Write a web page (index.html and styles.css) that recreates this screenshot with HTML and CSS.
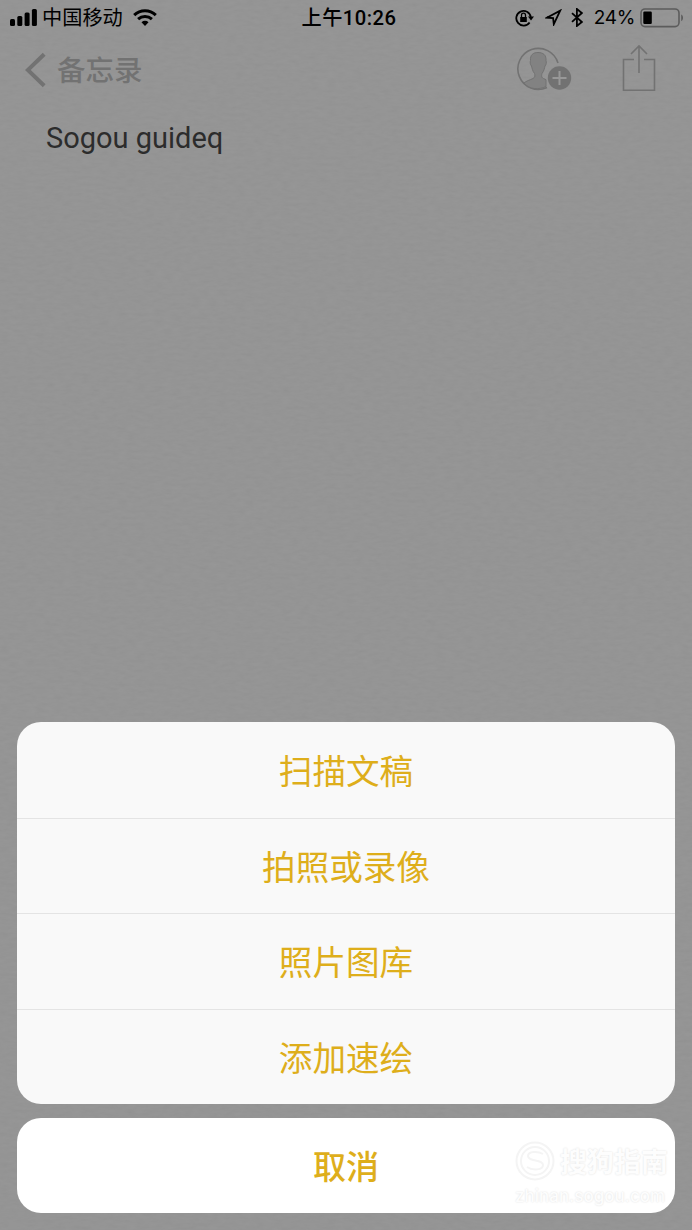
FILE: index.html
```html
<!DOCTYPE html>
<html lang="zh-CN">

<head>
    <meta charset="UTF-8" />
    <meta name="viewport" content="width=device-width, initial-scale=1.0" />
    <title>备忘录</title>
    <link rel="stylesheet" href="styles.css">
</head>

<body>
    <!-- Paper grain -->
    <svg class="paper" aria-hidden="true">
        <filter id="grain" x="0" y="0" width="100%" height="100%">
            <feTurbulence type="fractalNoise" baseFrequency="0.11 0.3" numOctaves="3" seed="4" />
            <feColorMatrix type="saturate" values="0" />
            <feComponentTransfer>
                <feFuncA type="linear" slope="0" intercept="1" />
            </feComponentTransfer>
        </filter>
        <rect width="100%" height="100%" filter="url(#grain)" />
    </svg>

    <div class="screen">
        <header class="status-bar">
            <div class="status-left">
                <svg class="signal" width="27" height="17" viewBox="0 0 27 17">
                    <rect x="0" y="10" width="5" height="7" rx="1.5" />
                    <rect x="7.3" y="7" width="5" height="10" rx="1.5" />
                    <rect x="14.6" y="3.5" width="5" height="13.5" rx="1.5" />
                    <rect x="21.9" y="0" width="5" height="17" rx="1.5" />
                </svg>
                <span class="carrier">中国移动</span>
                <svg class="wifi" width="24" height="17" viewBox="0 0 24 17">
                    <path d="M1.2 6.2C7.2.4 16.8.4 22.8 6.2" />
                    <path d="M5.1 10.1c3.9-3.6 9.9-3.6 13.8 0" />
                    <path class="dot" d="M8.5 13.2c2-1.8 5-1.8 7 0L12 17z" />
                </svg>
            </div>
            <div class="time">上午10:26</div>
            <div class="status-right">
                <svg class="lock" width="19" height="18" viewBox="0 0 19 18">
                    <path d="M14.6 13.4A7.3 7.3 0 1 1 15.8 8" />
                    <path class="solid" d="M13 7.4h6l-3 4zM5.2 8h6.600v5H5.200z" />
                    <path class="shackle" d="M6.500 8V6.200a2 2 0 0 1 4 0V8" />
                </svg>
                <svg class="location" width="17" height="17" viewBox="0 0 17 17">
                    <path d="M1.800 8.700 15.200 1.600 8.800 15.200 8.100 9z" />
                </svg>
                <svg class="bluetooth" width="12" height="19" viewBox="0 0 12 19">
                    <path d="M1 5.200 10.800 14 5.900 18V1L10.800 5 1 13.800" />
                </svg>
                <span class="percent">24%</span>
                <svg class="battery" width="44" height="20" viewBox="0 0 44 20">
                    <rect class="case" x="1" y="1" width="38" height="17.600" rx="4" />
                    <rect class="level" x="3.300" y="3.600" width="8.500" height="12.400" rx="1.200" />
                    <path class="cap" d="M41.200 6.500c2.400.7 2.400 5.900 0 6.600z" />
                </svg>
            </div>
        </header>

        <nav class="nav-bar">
            <a class="back" href="#">
                <svg width="22" height="36" viewBox="0 0 22 36">
                    <path d="M19.200 2.200 2.800 18 19.200 33.800" />
                </svg>
                <span>备忘录</span>
            </a>
            <div class="nav-actions">
                <svg class="add-person" width="55" height="44" viewBox="0 0 55 44">
                    <path class="line" d="M41 16A20.500 20.500 0 1 0 30 40.500" />
                    <path class="person" d="M7 36C9 34 13 33 16 31.500C18.500 30.300 18 28 17.500 26.500C15.500 24 15 21 14.500 19C13 17.500 13 15 13.500 13.500C13 8 16 5.500 21 5.500S29.500 8 29 13.500C29.500 15 29.500 17.500 28 19C27.500 21 27 24 25 26.500C24.500 28 24 30.300 26.500 31.500L29 32.700V39.500C22 43 12 42.500 7 36Z" />
                    <circle class="badge" cx="42.500" cy="31" r="11.700" />
                    <path class="plus" d="M42.500 24v14M35.500 31h14" />
                </svg>
                <svg class="share" width="34" height="48" viewBox="0 0 34 48">
                    <path d="M12 15.500H1.500v30.700h31V15.500H22M17 29V2M9 10l8-8 8 8" />
                </svg>
            </div>
        </nav>

        <main class="note">Sogou guideq</main>

        <div class="action-sheet">
            <div class="options">
                <button class="option">扫描文稿</button>
                <button class="option">拍照或录像</button>
                <button class="option">照片图库</button>
                <button class="option">添加速绘</button>
            </div>
            <div class="cancel-wrap">
                <button class="cancel">取消</button>
                <div class="watermark">
                    <div class="brand">
                        <svg width="40" height="40" viewBox="0 0 40 40">
                            <circle cx="20" cy="20" r="18.500" />
                            <circle cx="20" cy="20" r="14" />
                            <path d="M28 13c-5-3-15-3-15 2 0 6 15 3 15 9 0 5-10 6-16 2" />
                        </svg>
                        <span>搜狗指南</span>
                    </div>
                    <div class="site">zhinan.sogou.com</div>
                </div>
            </div>
        </div>
    </div>
</body>

</html>
```
FILE: styles.css
```css
:root {
    --bg: #939393;
    --dim: #727272;
    --gold: #deae1b;
    --line: #e4e4e4;
}

* {
    box-sizing: border-box;
}

body {
    margin: 0;
    background: var(--bg);
    font-family: Inter, "Noto Sans CJK SC", sans-serif;
    color: #000;
}

svg {
    display: block;
    flex: none;
    fill: none;
}

.paper {
    position: absolute;
    inset: 0;
    width: 100%;
    height: 100%;
    opacity: 0.045;
}

.screen {
    position: relative;
    display: flex;
    flex-direction: column;
    height: 1230px;
    overflow: hidden;
}

.status-bar {
    display: grid;
    grid-template-columns: 1fr auto 1fr;
    align-items: center;
    height: 35px;
    padding: 0 8px 0 10px;
    font-size: 19px;
    line-height: 34px;
}

.status-left,
.status-right {
    display: flex;
    align-items: center;
}

.status-right {
    justify-content: flex-end;
}

.signal,
.wifi .dot {
    fill: #000;
}

.carrier {
    margin: 1px 10px 0 5px;
    font-size: 20.2px;
}

.wifi {
    stroke: #000;
    stroke-width: 3;
}

.wifi .dot {
    stroke: none;
}

.time {
    padding-left: 4px;
    font-family: Roboto, "Noto Sans CJK SC", sans-serif;
    font-size: 20.2px;
    font-weight: 500;
    letter-spacing: 0.5px;
}

.lock,
.location,
.bluetooth {
    stroke: #000;
    stroke-width: 1.8;
}

.lock .solid {
    fill: #000;
    stroke: none;
}

.lock .shackle {
    stroke-width: 1.3;
}

.location {
    margin-left: 11px;
}

.bluetooth {
    margin: 0 11px 0 9px;
}

.percent {
    margin-right: 5px;
    letter-spacing: -0.3px;
}

.battery .case {
    stroke: #5c5c5c;
    stroke-width: 1.6;
}

.battery .level {
    fill: #000;
}

.battery .cap {
    fill: #5c5c5c;
}

.nav-bar {
    display: flex;
    justify-content: space-between;
    height: 70px;
    padding: 9px 36px 0 25px;
}

.back {
    display: flex;
    align-items: center;
    gap: 10px;
    height: 51px;
    color: var(--dim);
    font-size: 28.5px;
    font-weight: 500;
    line-height: 50px;
    text-decoration: none;
}

.back span {
    padding-top: 3px;
}

.back svg {
    stroke: var(--dim);
    stroke-width: 4;
}

.nav-actions {
    display: flex;
    align-items: flex-start;
    gap: 50px;
    stroke: var(--dim);
    stroke-width: 1.6;
}

.add-person {
    margin-top: 3px;
}

.add-person .person {
    fill: #828282;
    stroke-width: 1;
}

.add-person .badge {
    fill: var(--dim);
    stroke: none;
}

.add-person .plus {
    stroke: #989898;
    stroke-width: 2;
}

.note {
    flex: 1;
    padding: 13px 46px;
    color: #2c2c2c;
    font-family: Roboto, "Noto Sans CJK SC", sans-serif;
    font-size: 29px;
    line-height: 40px;
}

.action-sheet {
    display: flex;
    flex-direction: column;
    gap: 14px;
    padding: 0 17px 17px;
}

.options {
    height: 382px;
    display: grid;
    grid-template-rows: repeat(4, 1fr);
    overflow: hidden;
    border-radius: 24px;
    background: #f9f9f9;
}

.option,
.cancel {
    width: 100%;
    padding: 4px 0 0;
    border: none;
    background: none;
    color: var(--gold);
    font-family: inherit;
    font-size: 33.6px;
    line-height: 1;
}

.option + .option {
    border-top: 1px solid var(--line);
}

.cancel-wrap {
    position: relative;
    height: 95px;
}

.cancel {
    height: 100%;
    border-radius: 24px;
    background: #fff;
    font-size: 33px;
    font-weight: 500;
}

/* Site mark over the cancel button */
.watermark {
    position: absolute;
    top: 21px;
    right: 7px;
    width: 153px;
    color: #fdfdfd;
    text-shadow: 0 0 2px #ddd;
    pointer-events: none;
}

.brand {
    display: flex;
    align-items: center;
    gap: 5px;
    font-size: 27px;
    font-weight: 700;
    line-height: 40px;
    white-space: nowrap;
}

.brand span {
    padding-top: 4px;
}

.brand svg {
    stroke: #f4f4f4;
    stroke-width: 2;
}

.site {
    font-size: 17px;
    font-weight: 500;
    line-height: 26px;
}
```
